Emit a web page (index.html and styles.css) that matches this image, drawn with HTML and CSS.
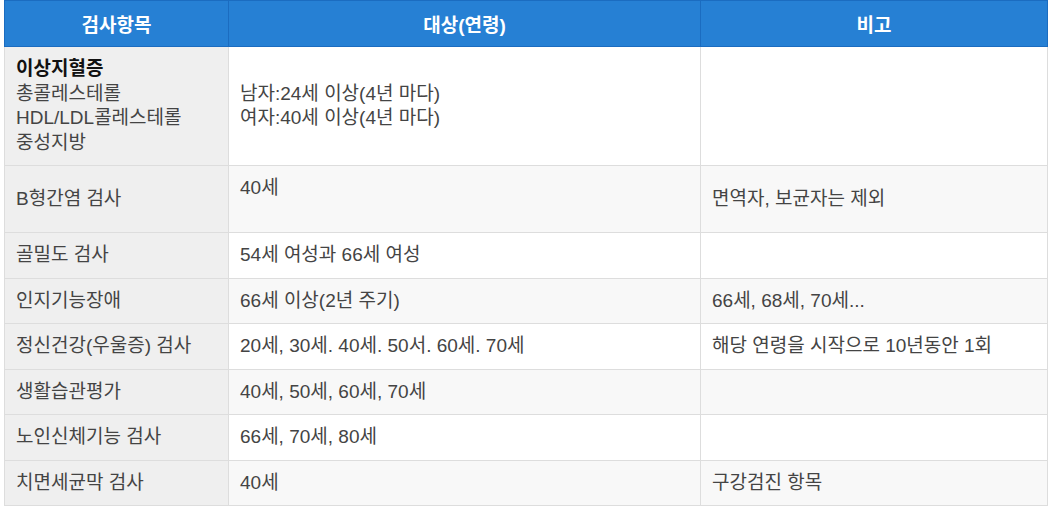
FILE: index.html
```html
<!DOCTYPE html>
<html lang="ko">
<head>
<meta charset="utf-8">
<link rel="stylesheet" href="styles.css">
</head>
<body>
<table class="exam">
  <colgroup>
    <col class="c1">
    <col class="c2">
    <col class="c3">
  </colgroup>
  <thead>
    <tr><th>검사항목</th><th>대상(연령)</th><th>비고</th></tr>
  </thead>
  <tbody>
    <tr>
      <td class="item"><strong>이상지혈증</strong><br>총콜레스테롤<br>HDL/LDL콜레스테롤<br>중성지방</td>
      <td>남자:24세 이상(4년 마다)<br>여자:40세 이상(4년 마다)</td>
      <td></td>
    </tr>
    <tr class="tall">
      <td class="item">B형간염 검사</td>
      <td class="top">40세</td>
      <td>면역자, 보균자는 제외</td>
    </tr>
    <tr>
      <td class="item">골밀도 검사</td>
      <td>54세 여성과 66세 여성</td>
      <td></td>
    </tr>
    <tr>
      <td class="item">인지기능장애</td>
      <td>66세 이상(2년 주기)</td>
      <td>66세, 68세, 70세...</td>
    </tr>
    <tr>
      <td class="item">정신건강(우울증) 검사</td>
      <td>20세, 30세. 40세. 50서. 60세. 70세</td>
      <td>해당 연령을 시작으로 10년동안 1회</td>
    </tr>
    <tr>
      <td class="item">생활습관평가</td>
      <td>40세, 50세, 60세, 70세</td>
      <td></td>
    </tr>
    <tr>
      <td class="item">노인신체기능 검사</td>
      <td>66세, 70세, 80세</td>
      <td></td>
    </tr>
    <tr>
      <td class="item">치면세균막 검사</td>
      <td>40세</td>
      <td>구강검진 항목</td>
    </tr>
  </tbody>
</table>
</body>
</html>
```

FILE: styles.css
```css
html, body {
  margin: 0;
  padding: 0;
  background: #ffffff;
}

body {
  padding: 0 3px 0 4px;
  font-family: "Liberation Sans", "Noto Sans CJK KR", sans-serif;
  font-size: 19px;
  color: #444444;
}

.exam {
  width: 100%;
  border-collapse: collapse;
  table-layout: fixed;
}

.c1 { width: 224px; }
.c2 { width: 472px; }

.exam th {
  background: #2680d4;
  color: #ffffff;
  font-weight: bold;
  font-size: 19px;
  height: 45px;
  padding: 0 12px;
  border: 1px solid #1b6cc0;
  text-align: center;
  vertical-align: middle;
}

.exam td {
  border: 1px solid #dddddd;
  padding: 10px 11px;
  line-height: 24.5px;
  vertical-align: middle;
  text-align: left;
}

.exam tbody tr:nth-child(even) td {
  background: #f8f8f8;
}

.exam td.item,
.exam tbody tr:nth-child(even) td.item {
  background: #efefef;
}

.exam td.item strong {
  color: #111111;
  font-weight: bold;
}

.exam tr.tall td {
  height: 46px;
}

.exam td.top {
  vertical-align: top;
}
```
